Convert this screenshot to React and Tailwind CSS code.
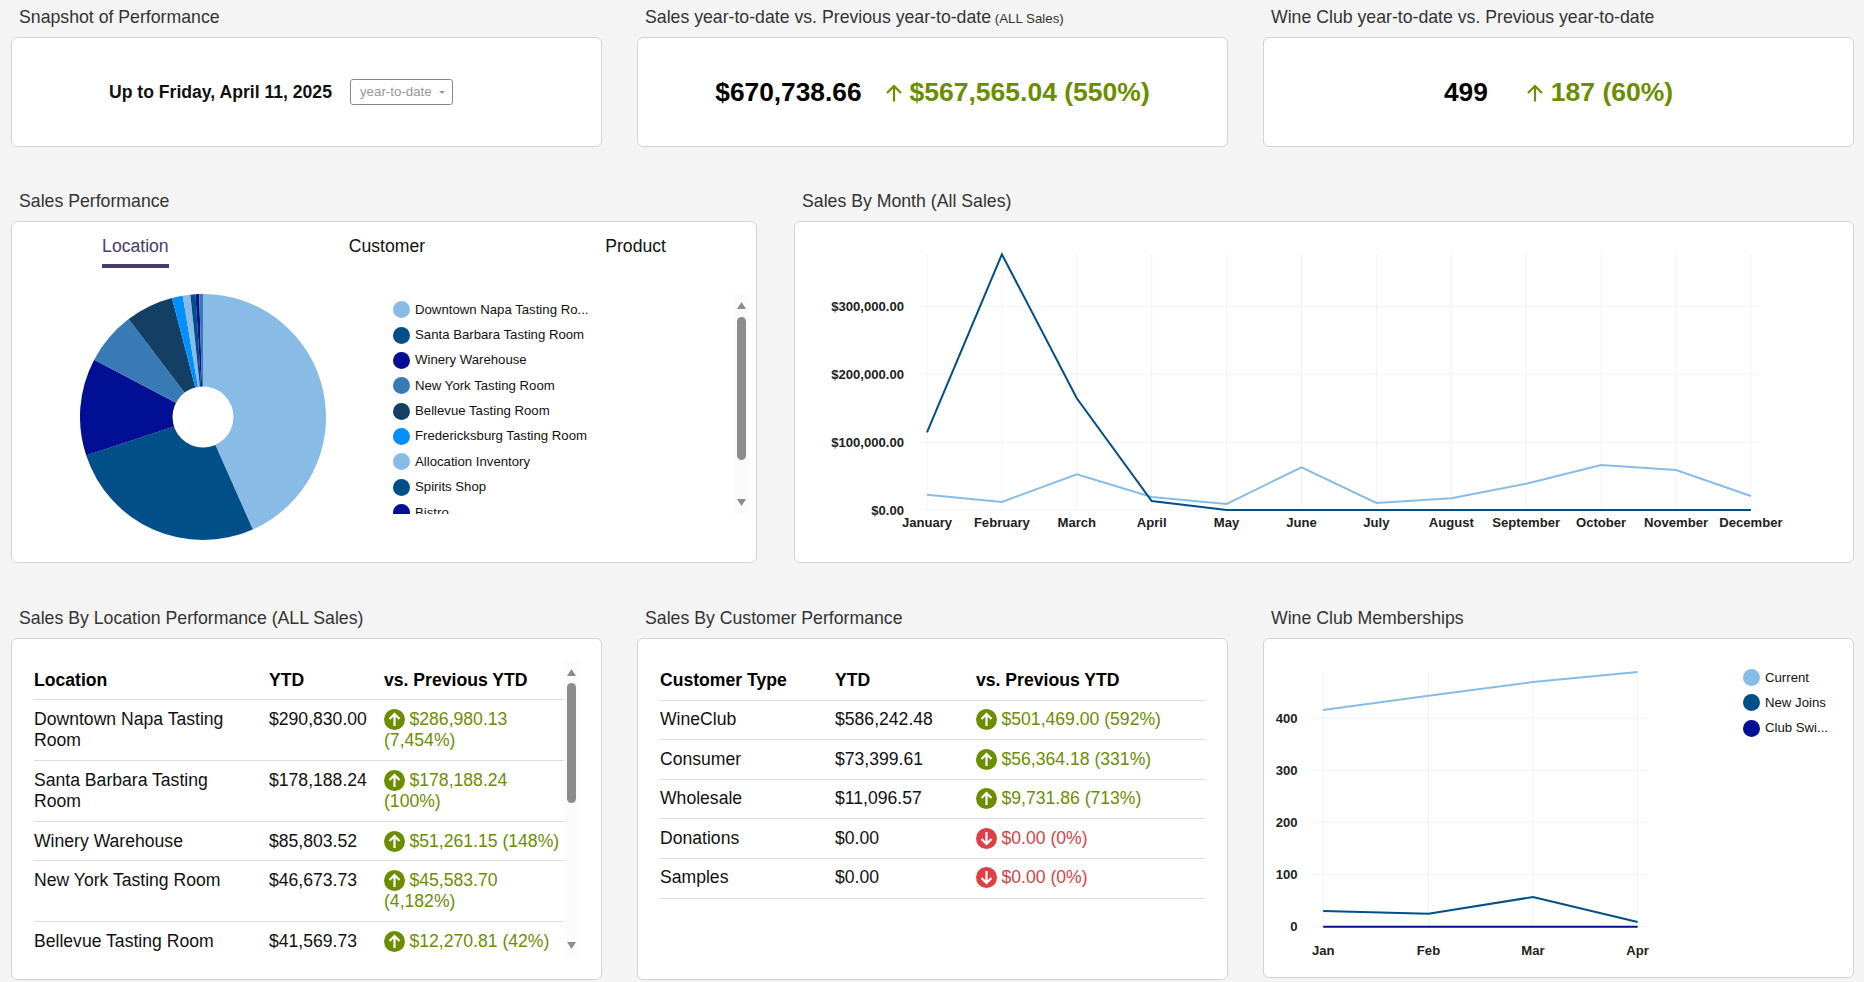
const LIGHT = "#88bce6";
const DARK = "#004f89";
const NAVY = "#000f94";
const MID = "#387ab5";
const DEEP = "#123f63";
const BRIGHT = "#0090ff";

const SLICES = [
  { from: 0, to: 156.1, color: LIGHT },
  { from: 156.1, to: 251.7, color: DARK },
  { from: 251.7, to: 297.8, color: NAVY },
  { from: 297.8, to: 322.8, color: MID },
  { from: 322.8, to: 345.4, color: DEEP },
  { from: 345.4, to: 350.5, color: BRIGHT },
  { from: 350.5, to: 354.1, color: LIGHT },
  { from: 354.1, to: 356.5, color: DARK },
  { from: 356.5, to: 358.2, color: NAVY },
  { from: 358.2, to: 360, color: MID },
];

const LEGEND = [
  { label: "Downtown Napa Tasting Ro...", color: LIGHT },
  { label: "Santa Barbara Tasting Room", color: DARK },
  { label: "Winery Warehouse", color: NAVY },
  { label: "New York Tasting Room", color: MID },
  { label: "Bellevue Tasting Room", color: DEEP },
  { label: "Fredericksburg Tasting Room", color: BRIGHT },
  { label: "Allocation Inventory", color: LIGHT },
  { label: "Spirits Shop", color: DARK },
  { label: "Bistro", color: NAVY },
];

const MONTHS = [
  "January", "February", "March", "April", "May", "June",
  "July", "August", "September", "October", "November", "December",
];
const SALES_CURRENT = [432.3, 254.3, 398.3, 501, 510, 510, 510, 510, 510, 510, 510, 510];
const SALES_PREVIOUS = [494.7, 502, 474.3, 497, 504, 467.3, 503, 498.3, 483.7, 465, 470, 496];

const LOCATIONS = [
  { name: "Downtown Napa Tasting Room", ytd: "$290,830.00", diff: "$286,980.13 (7,454%)", up: true },
  { name: "Santa Barbara Tasting Room", ytd: "$178,188.24", diff: "$178,188.24 (100%)", up: true },
  { name: "Winery Warehouse", ytd: "$85,803.52", diff: "$51,261.15 (148%)", up: true },
  { name: "New York Tasting Room", ytd: "$46,673.73", diff: "$45,583.70 (4,182%)", up: true },
  { name: "Bellevue Tasting Room", ytd: "$41,569.73", diff: "$12,270.81 (42%)", up: true },
];

const CUSTOMERS = [
  { name: "WineClub", ytd: "$586,242.48", diff: "$501,469.00 (592%)", up: true },
  { name: "Consumer", ytd: "$73,399.61", diff: "$56,364.18 (331%)", up: true },
  { name: "Wholesale", ytd: "$11,096.57", diff: "$9,731.86 (713%)", up: true },
  { name: "Donations", ytd: "$0.00", diff: "$0.00 (0%)", up: false },
  { name: "Samples", ytd: "$0.00", diff: "$0.00 (0%)", up: false },
];

function slicePath(from, to) {
  const r = 123;
  const a = ((from - 90) * Math.PI) / 180;
  const b = ((to - 90) * Math.PI) / 180;
  const large = to - from > 180 ? 1 : 0;
  return `M123 123 L${123 + r * Math.cos(a)} ${123 + r * Math.sin(a)} A${r} ${r} 0 ${large} 1 ${123 + r * Math.cos(b)} ${123 + r * Math.sin(b)} Z`;
}

function Panel({ label, small, className, children }) {
  return (
    <section>
      <h2 className="h-[37px] truncate pl-2 pt-[7px] text-[17.7px] leading-[21.6px] font-normal text-[#333]">
        {label}
        {small && <span className="text-[13.3px]"> {small}</span>}
      </h2>
      <div className={`rounded-md border border-[#d3d3d3] bg-white ${className}`}>{children}</div>
    </section>
  );
}

function Metric({ value, diff, gap }) {
  return (
    <div className="flex h-full items-center justify-center pt-[1px] font-bold">
      <span className={`text-[26.3px] text-black ${gap}`}>{value}</span>
      <span className="flex items-center gap-[7px] text-[26.5px] text-[#6b8e00]">
        <svg width="18" height="18" viewBox="0 0 18 18" fill="none" stroke="#6b8e00" strokeWidth="2.2">
          <path d="M9 17.5V2M2 9l7-7 7 7" />
        </svg>
        {diff}
      </span>
    </div>
  );
}

function Scrollbar({ thumbTop, thumbHeight, arrowInset }) {
  return (
    <div className="relative h-full w-[15px] shrink-0 bg-[#fbfbfb]">
      <svg className="absolute left-[3px]" style={{ top: arrowInset }} width="9" height="7" viewBox="0 0 9 7">
        <path d="M4.5 0L9 7H0z" fill="#8c8c8c" />
      </svg>
      <div
        className="absolute left-[3px] w-[9px] rounded-[5px] bg-[#8c8c8c]"
        style={{ top: thumbTop, height: thumbHeight }}
      />
      <svg className="absolute left-[3px]" style={{ bottom: arrowInset }} width="9" height="7" viewBox="0 0 9 7">
        <path d="M0 0H9L4.5 7z" fill="#8c8c8c" />
      </svg>
    </div>
  );
}

function LegendItem({ label, color, className }) {
  return (
    <div className={`flex items-center gap-[5px] text-[13.2px] text-[#111] ${className}`}>
      <span className="h-[17px] w-[17px] shrink-0 rounded-full" style={{ backgroundColor: color }} />
      <span className="whitespace-nowrap">{label}</span>
    </div>
  );
}

function ChangeCell({ diff, up }) {
  const color = up ? "text-[#6b8e00]" : "text-[#e03e45]";
  return (
    <span className={color}>
      <svg className="mr-[4.5px] inline-block align-top" width="21" height="21" viewBox="0 0 21 21" fill="none">
        <circle cx="10.5" cy="10.5" r="10.5" fill={up ? "#6b8e00" : "#e03e45"} />
        <path
          d={up ? "M10.5 17V5M5.5 10l5-5 5 5" : "M10.5 4v12M5.5 11l5 5 5-5"}
          stroke="#fff"
          strokeWidth="2.2"
        />
      </svg>
      {diff}
    </span>
  );
}

function PerformanceTable({ heading, rows, widths, className }) {
  return (
    <table className={`table-fixed border-collapse text-[17.6px] text-[#111] ${className}`}>
      <colgroup>
        {widths.map((w) => (
          <col key={w} className={w} />
        ))}
      </colgroup>
      <thead>
        <tr className="border-b border-[#dedede] text-left text-black">
          <th className="py-[8.5px] font-bold">{heading}</th>
          <th className="py-[8.5px] font-bold">YTD</th>
          <th className="py-[8.5px] font-bold">vs. Previous YTD</th>
        </tr>
      </thead>
      <tbody>
        {rows.map((row) => (
          <tr key={row.name} className="border-b border-[#dedede] align-top">
            <td className="py-[8.5px] pr-4">{row.name}</td>
            <td className="py-[8.5px]">{row.ytd}</td>
            <td className="py-[8.5px]">
              <ChangeCell diff={row.diff} up={row.up} />
            </td>
          </tr>
        ))}
      </tbody>
    </table>
  );
}

function SalesChart() {
  const x = (i) => 927 + i * 74.9;
  const points = (ys) => ys.map((y, i) => `${x(i)},${y}`).join(" ");
  const ticks = [
    { y: 306.3, label: "$300,000.00" },
    { y: 374.3, label: "$200,000.00" },
    { y: 442.3, label: "$100,000.00" },
    { y: 510, label: "$0.00" },
  ];
  return (
    <svg className="block" width="1058" height="340" viewBox="795 222 1058 340">
      {MONTHS.map((m, i) => (
        <line key={m} x1={x(i)} x2={x(i)} y1="254" y2="510" stroke="#f2f2f2" />
      ))}
      {ticks.map((t) => (
        <line key={t.y} x1="919" x2="1759" y1={t.y} y2={t.y} stroke="#f2f2f2" />
      ))}
      <polyline points={points(SALES_PREVIOUS)} fill="none" stroke={LIGHT} strokeWidth="2" />
      <polyline points={points(SALES_CURRENT)} fill="none" stroke={DARK} strokeWidth="2" />
      <g fontSize="13.1" fontWeight="700" fill="#222">
        {ticks.map((t) => (
          <text key={t.label} x="904" y={t.y + 4.5} textAnchor="end">
            {t.label}
          </text>
        ))}
        {MONTHS.map((m, i) => (
          <text key={m} x={x(i)} y="527" textAnchor="middle">
            {m}
          </text>
        ))}
      </g>
    </svg>
  );
}

function ClubChart() {
  const xs = [1323.2, 1428.5, 1533, 1637.6];
  const ticks = [
    { y: 718.3, label: "400" },
    { y: 770.3, label: "300" },
    { y: 822.3, label: "200" },
    { y: 874.7, label: "100" },
    { y: 926.7, label: "0" },
  ];
  const line = (ys) => ys.map((y, i) => `${xs[i]},${y}`).join(" ");
  return (
    <svg className="block shrink-0" width="400" height="338" viewBox="1264 639 400 338">
      {xs.map((gx) => (
        <line key={gx} x1={gx} x2={gx} y1="672" y2="927" stroke="#f2f2f2" />
      ))}
      {ticks.map((t) => (
        <line key={t.y} x1="1312.6" x2="1648.6" y1={t.y} y2={t.y} stroke="#f2f2f2" />
      ))}
      <polyline points={line([710, 695.7, 682, 672])} fill="none" stroke={LIGHT} strokeWidth="2" />
      <polyline points={line([911, 913.7, 897, 922])} fill="none" stroke={DARK} strokeWidth="2" />
      <polyline points={line([926.7, 926.7, 926.7, 926.7])} fill="none" stroke={NAVY} strokeWidth="2" />
      <g fontSize="13.1" fontWeight="700" fill="#222">
        {ticks.map((t) => (
          <text key={t.label} x="1297.5" y={t.y + 4.5} textAnchor="end">
            {t.label}
          </text>
        ))}
        {["Jan", "Feb", "Mar", "Apr"].map((m, i) => (
          <text key={m} x={xs[i]} y="955" textAnchor="middle">
            {m}
          </text>
        ))}
      </g>
    </svg>
  );
}

export default function App() {
  return (
    <div className="min-h-[982px] bg-[#f4f4f4] pl-[11px] pr-2.5 font-['Liberation_Sans',Arial,sans-serif]">
      <div className="grid grid-cols-[591px_591px_1fr] gap-x-[35px]">
        <Panel label="Snapshot of Performance" className="h-[110px]">
          <div className="flex h-full items-center gap-[18px] pl-[97px]">
            <span className="pt-[1px] text-[17.6px] font-bold text-[#111]">Up to Friday, April 11, 2025</span>
            <div className="flex h-[26px] w-[103px] items-center rounded-[3px] border border-[#888] bg-white pl-[9px] text-[13.3px] text-[#999]">
              year-to-date
              <span className="ml-[7px] h-0 w-0 border-x-[3px] border-t-[3px] border-x-transparent border-t-[#999]" />
            </div>
          </div>
        </Panel>
        <Panel label="Sales year-to-date vs. Previous year-to-date" small="(ALL Sales)" className="h-[110px]">
          <Metric value="$670,738.66" diff="$567,565.04 (550%)" gap="mr-[23px]" />
        </Panel>
        <Panel label="Wine Club year-to-date vs. Previous year-to-date" className="h-[110px]">
          <Metric value="499" diff="187 (60%)" gap="mr-[38px]" />
        </Panel>
      </div>

      <div className="mt-[37px] grid grid-cols-[746px_1fr] gap-x-[37px]">
        <Panel label="Sales Performance" className="h-[342px]">
          <div className="flex justify-around text-[17.6px] text-[#111]">
            <div className="h-[46px] border-b-4 border-[#4a3a6b] pt-[14px] leading-[21.6px] text-[#4a3a6b]">Location</div>
            <div className="pt-[14px] leading-[21.6px]">Customer</div>
            <div className="pt-[14px] leading-[21.6px]">Product</div>
          </div>
          <div className="mt-[26px] flex h-[246px] pl-[67.5px]">
            <svg className="shrink-0" width="246" height="246" viewBox="0 0 246 246">
              {SLICES.map((s) => (
                <path key={s.from} d={slicePath(s.from, s.to)} fill={s.color} />
              ))}
              <circle cx="123" cy="123" r="30.5" fill="#fff" />
            </svg>
            <div className="ml-[67.5px] h-[220px] flex-1 overflow-hidden pt-[3px]">
              {LEGEND.map((item) => (
                <LegendItem key={item.label} label={item.label} color={item.color} className="h-[25.35px]" />
              ))}
            </div>
            <div className="mr-[7px] h-[220px]">
              <Scrollbar thumbTop={23} thumbHeight={143} arrowInset={8} />
            </div>
          </div>
        </Panel>
        <Panel label="Sales By Month (All Sales)" className="h-[342px]">
          <SalesChart />
        </Panel>
      </div>

      <div className="mt-[38px] grid grid-cols-[591px_591px_1fr] gap-x-[35px]">
        <Panel label="Sales By Location Performance (ALL Sales)" className="h-[342px]">
          <div className="mt-[22px] flex h-[296px] pl-[22px]">
            <div className="h-full overflow-hidden">
              <PerformanceTable
                heading="Location"
                rows={LOCATIONS}
                widths={["w-[235px]", "w-[115px]", "w-[180px]"]}
                className="w-[530px] leading-[21.4px]"
              />
            </div>
            <Scrollbar thumbTop={22} thumbHeight={120} arrowInset={8} />
          </div>
        </Panel>
        <Panel label="Sales By Customer Performance" className="h-[342px]">
          <div className="mt-[22px] pl-[22px]">
            <PerformanceTable
              heading="Customer Type"
              rows={CUSTOMERS}
              widths={["w-[175px]", "w-[141px]", "w-[229px]"]}
              className="w-[545px] leading-[21.6px]"
            />
          </div>
        </Panel>
        <Panel label="Wine Club Memberships" className="h-[340px]">
          <div className="flex">
            <ClubChart />
            <div className="ml-[79px] pt-[26px]">
              <LegendItem label="Current" color={LIGHT} className="h-[25.3px]" />
              <LegendItem label="New Joins" color={DARK} className="h-[25.3px]" />
              <LegendItem label="Club Swi..." color={NAVY} className="h-[25.3px]" />
            </div>
          </div>
        </Panel>
      </div>
    </div>
  );
}
